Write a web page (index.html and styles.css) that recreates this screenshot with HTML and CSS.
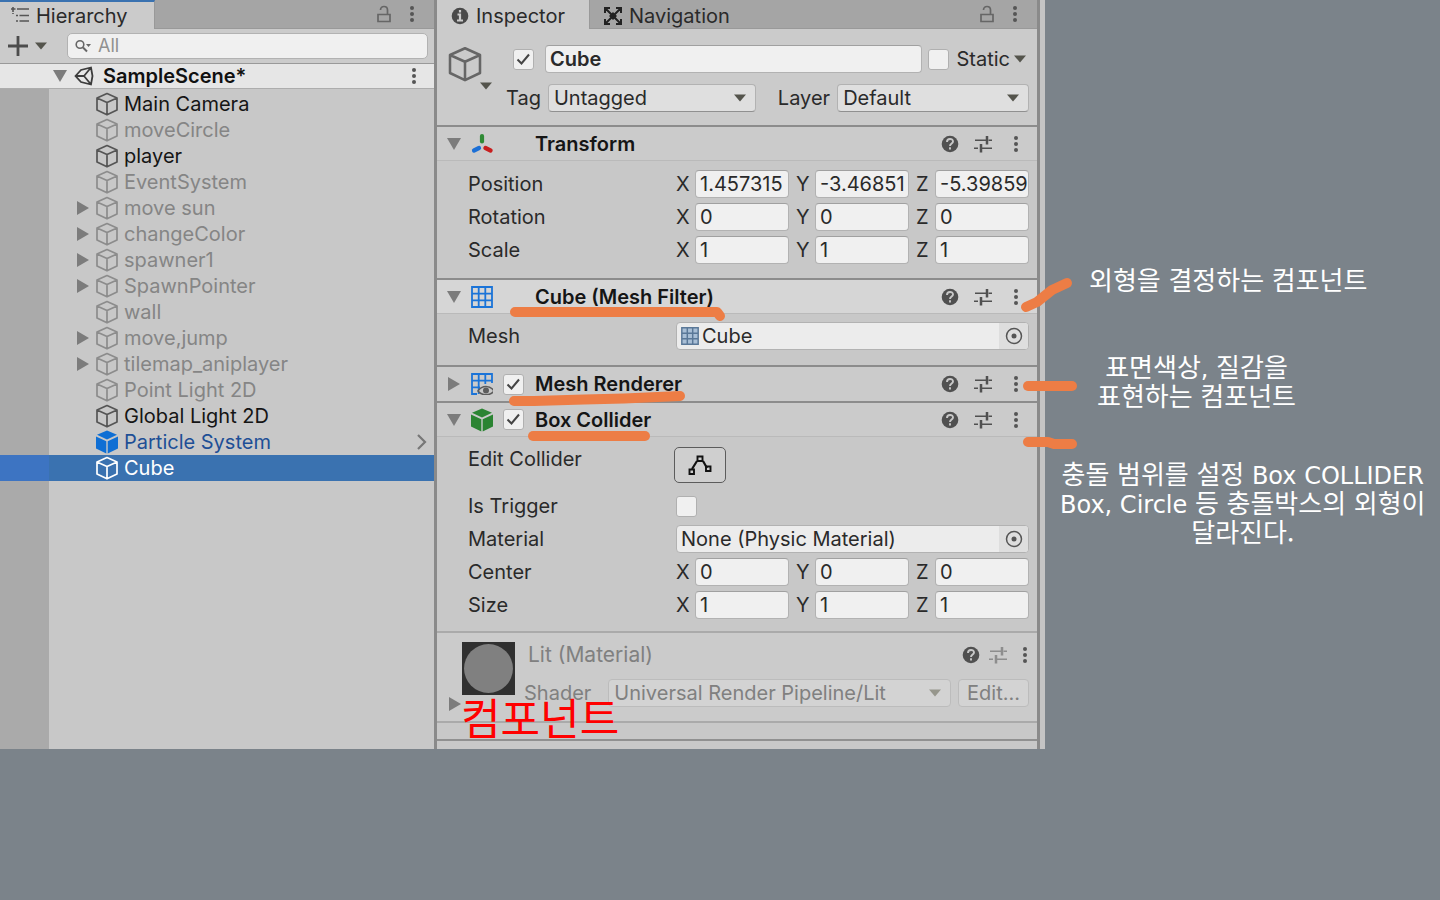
FILE: index.html
```html
<!DOCTYPE html>
<html lang="ko">
<head>
<meta charset="utf-8">
<title>Unity Inspector</title>
<link rel="stylesheet" href="styles.css">
</head>
<body>
<svg class="defs" aria-hidden="true">
  <symbol id="cube" viewBox="0 0 24 24"><path d="M12 1.500 22 6v12l-10 4.800L2 18V6zM2 6l10 4.500L22 6M12 10.500V22.500" fill="none" stroke="currentColor" stroke-width="1.700" stroke-linejoin="round"/></symbol>
  <symbol id="cube-solid" viewBox="0 0 24 24"><path d="M12 .5 22 4.800 12 9.400 2 4.800zM1 6.600l10.300 4.600v12.200L1 18.600zM23 6.600l-10.300 4.600v12.200L23 18.600z" fill="currentColor"/></symbol>
  <symbol id="down" viewBox="0 0 12 12"><path d="M0 2.500h12L6 9.500z" fill="currentColor"/></symbol>
  <symbol id="fold" viewBox="0 0 14 14"><path d="M0 1h14L7 13z" fill="currentColor"/></symbol>
  <symbol id="right" viewBox="0 0 14 14"><path d="M1 0v14l12-7z" fill="currentColor"/></symbol>
  <symbol id="dots" viewBox="0 0 6 18"><g fill="currentColor"><circle cx="3" cy="3" r="2"/><circle cx="3" cy="9" r="2"/><circle cx="3" cy="15" r="2"/></g></symbol>
  <symbol id="lock" viewBox="0 0 16 18"><path d="M2 9.500h12v7H2zM4.500 5C4.500 .3 11.500 .3 11.500 5v4.500" fill="none" stroke="currentColor" stroke-width="1.700"/></symbol>
  <symbol id="check" viewBox="0 0 20 20"><path d="M4.500 10.500l4 4L16 5.500" fill="none" stroke="currentColor" stroke-width="2"/></symbol>
  <symbol id="help" viewBox="0 0 18 18"><circle cx="9" cy="9" r="8.300" fill="currentColor"/><path d="M6 7c0-4 6-4 6-.5 0 2-3 2-3 4.500M9 12.300v2.200" fill="none" stroke="#c8c8c8" stroke-width="1.900"/></symbol>
  <symbol id="preset" viewBox="0 0 18 18"><path d="M1 5.200h11M14.500 5.200H18M0 13.300h4M8 13.300h10" fill="none" stroke="currentColor" stroke-width="1.600"/><path d="M13 1v8.500M7 9v8.500" stroke="currentColor" stroke-width="2.500"/></symbol>
  <symbol id="target" viewBox="0 0 18 18"><circle cx="9" cy="9" r="7.500" fill="none" stroke="currentColor" stroke-width="1.500"/><circle cx="9" cy="9" r="2.500" fill="currentColor"/></symbol>
  <symbol id="grid" viewBox="0 0 22 22"><path d="M1 1h20v20H1zM7.700 1v20M14.300 1v20M1 7.700h20M1 14.300h20" fill="none" stroke="currentColor" stroke-width="1.800"/></symbol>
</svg>

<div class="page">
  <section class="hierarchy" aria-label="Hierarchy">
    <header class="tabs">
      <button class="tab tab-active tab-focus"><svg class="i18" viewBox="0 0 18 18"><path d="M2 0v5M0 2h4.500M6 2h12M5 8.500h2M8.500 8.500H18M5 14h2M8.500 14H18M2 6v1" stroke="#555" stroke-width="1.600"/></svg>Hierarchy</button>
      <span class="tab-tools"><button aria-label="Lock"><svg class="lock"><use href="#lock"/></svg></button><button aria-label="Menu"><svg class="dots"><use href="#dots"/></svg></button></span>
    </header>
    <div class="toolbar">
      <button class="add" aria-label="Create"><svg class="plus" viewBox="0 0 20 20"><path d="M10 0v20M0 10h20" stroke="#4c4c4c" stroke-width="2.800"/></svg><svg class="i12"><use href="#down"/></svg></button>
      <label class="search"><svg viewBox="0 0 16 14"><circle cx="5" cy="5.500" r="3.800" fill="none" stroke="#666" stroke-width="1.600"/><path d="M8 8.500l4 4" stroke="#666" stroke-width="2"/><path d="M11 5h5l-2.500 3z" fill="#666"/></svg><input type="text" placeholder="All" aria-label="Search"></label>
    </div>
    <div class="scene"><button aria-label="Fold"><svg class="i14 fold"><use href="#fold"/></svg></button>
      <svg class="unity" viewBox="0 0 20 20"><path d="M1.500 10 7 4l10-2.500 1.500 8.500L17 18.500 7 16zM1.500 10H10M10 10 17 1.500M10 10l7 8.500" fill="none" stroke="#3c3c3c" stroke-width="1.800"/></svg>
      <b>SampleScene*</b><button class="scene-menu" aria-label="Scene menu"><svg class="dots"><use href="#dots"/></svg></button></div>
    <ul class="tree">
      <li><svg class="cube"><use href="#cube"/></svg>Main Camera</li>
      <li class="off"><svg class="cube"><use href="#cube"/></svg>moveCircle</li>
      <li><svg class="cube"><use href="#cube"/></svg>player</li>
      <li class="off"><svg class="cube"><use href="#cube"/></svg>EventSystem</li>
      <li class="off parent"><button aria-label="Expand"><svg class="i14"><use href="#right"/></svg></button><svg class="cube"><use href="#cube"/></svg>move sun</li>
      <li class="off parent"><button aria-label="Expand"><svg class="i14"><use href="#right"/></svg></button><svg class="cube"><use href="#cube"/></svg>changeColor</li>
      <li class="off parent"><button aria-label="Expand"><svg class="i14"><use href="#right"/></svg></button><svg class="cube"><use href="#cube"/></svg>spawner1</li>
      <li class="off parent"><button aria-label="Expand"><svg class="i14"><use href="#right"/></svg></button><svg class="cube"><use href="#cube"/></svg>SpawnPointer</li>
      <li class="off"><svg class="cube"><use href="#cube"/></svg>wall</li>
      <li class="off parent"><button aria-label="Expand"><svg class="i14"><use href="#right"/></svg></button><svg class="cube"><use href="#cube"/></svg>move,jump</li>
      <li class="off parent"><button aria-label="Expand"><svg class="i14"><use href="#right"/></svg></button><svg class="cube"><use href="#cube"/></svg>tilemap_aniplayer</li>
      <li class="off"><svg class="cube"><use href="#cube"/></svg>Point Light 2D</li>
      <li><svg class="cube"><use href="#cube"/></svg>Global Light 2D</li>
      <li class="prefab"><svg class="cube"><use href="#cube-solid"/></svg>Particle System<svg class="chevron" viewBox="0 0 10 16"><path d="M1 1l7 7-7 7" fill="none" stroke="#777" stroke-width="2.200"/></svg></li>
      <li class="selected"><svg class="cube"><use href="#cube"/></svg>Cube</li>
    </ul>
  </section>

  <section class="inspector" aria-label="Inspector">
    <header class="tabs">
      <button class="tab tab-active tab-inspector"><svg class="i18" viewBox="0 0 18 18"><circle cx="9" cy="9" r="8.300" fill="#4a4a4a"/><path d="M9 3v2.500M6.500 7.500H9V13M6 13.500h6" fill="none" stroke="#ccc" stroke-width="2.200"/></svg>Inspector</button>
      <button class="tab"><svg class="i18" viewBox="0 0 18 18"><path d="M2 2l14 14M16 2 2 16M1 6V1h5M12 1h5v5M17 12v5h-5M6 17H1v-5" fill="none" stroke="#222" stroke-width="2"/><path d="M9 5 13 9 9 13 5 9z" fill="#222"/></svg>Navigation</button>
      <span class="tab-tools"><button aria-label="Lock"><svg class="lock"><use href="#lock"/></svg></button><button aria-label="Menu"><svg class="dots"><use href="#dots"/></svg></button></span>
    </header>

    <div class="object">
      <button class="object-icon" aria-label="Icon"><svg class="big-cube"><use href="#cube"/></svg><svg class="i12"><use href="#down"/></svg></button>
      <div class="object-fields">
        <div class="object-row">
          <label class="check"><input type="checkbox" checked aria-label="Active"><svg><use href="#check"/></svg></label>
          <input class="field name" type="text" value="Cube" aria-label="Name">
          <label class="static"><span class="check"><input type="checkbox"><svg><use href="#check"/></svg></span>Static<svg class="i12"><use href="#down"/></svg></label>
        </div>
        <div class="object-row tag-row">
          <label for="tag">Tag</label><span class="select tag"><select id="tag"><option>Untagged</option></select><svg class="i12"><use href="#down"/></svg></span>
          <label class="layer-label" for="layer">Layer</label><span class="select layer"><select id="layer"><option>Default</option></select><svg class="i12"><use href="#down"/></svg></span>
        </div>
      </div>
    </div>

    <article class="component">
      <header><button class="folder" aria-label="Fold"><svg class="i14"><use href="#fold"/></svg></button>
        <svg class="kind" viewBox="0 0 22 22"><g stroke-width="4.200" stroke-linecap="round"><path d="M11 3v5.500" stroke="#2f8a35"/><path d="M8 15l-5 2.500" stroke="#1b6fd6"/><path d="M14.500 15l5 2.500" stroke="#c81e1e"/></g></svg>
        <span class="slot"></span><h2>Transform</h2>
        <span class="tools"><button aria-label="Help"><svg class="i18"><use href="#help"/></svg></button><button aria-label="Preset"><svg class="i18"><use href="#preset"/></svg></button><button aria-label="Menu"><svg class="dots"><use href="#dots"/></svg></button></span></header>
      <div class="props transform">
        <div class="prop"><span>Position</span><div class="xyz"><label>X<input class="field" value="1.457315"></label><label>Y<input class="field" value="-3.46851"></label><label>Z<input class="field" value="-5.39859"></label></div></div>
        <div class="prop"><span>Rotation</span><div class="xyz"><label>X<input class="field" value="0"></label><label>Y<input class="field" value="0"></label><label>Z<input class="field" value="0"></label></div></div>
        <div class="prop"><span>Scale</span><div class="xyz"><label>X<input class="field" value="1"></label><label>Y<input class="field" value="1"></label><label>Z<input class="field" value="1"></label></div></div>
      </div>
    </article>

    <article class="component">
      <header class="hover"><button class="folder" aria-label="Fold"><svg class="i14"><use href="#fold"/></svg></button>
        <svg class="kind blue"><use href="#grid"/></svg>
        <span class="slot"></span><h2>Cube (Mesh Filter)</h2>
        <span class="tools"><button aria-label="Help"><svg class="i18"><use href="#help"/></svg></button><button aria-label="Preset"><svg class="i18"><use href="#preset"/></svg></button><button aria-label="Menu"><svg class="dots"><use href="#dots"/></svg></button></span>
        <svg class="stroke under-filter" viewBox="0 0 216 18"><path d="M6 6h202l3 4"/></svg>
        <svg class="stroke out-filter" viewBox="0 0 54 36"><path d="M7 30l11-5L33 13l15-7"/></svg></header>
      <div class="props mesh">
        <div class="prop"><label for="mesh">Mesh</label><div class="object-field"><svg class="mesh-icon" viewBox="0 0 22 22"><path d="M1 1h20v20H1z" fill="#a9bfd6"/><use href="#grid"/></svg><input id="mesh" value="Cube"><button aria-label="Select"><svg class="i18"><use href="#target"/></svg></button></div></div>
      </div>
    </article>

    <article class="component">
      <header class="closed"><button class="folder" aria-label="Unfold"><svg class="i14"><use href="#right"/></svg></button>
        <svg class="kind" viewBox="0 0 22 22"><path d="M6 21H1V1h20v9M7.700 1v20M14.300 1v10M1 7.700h20M1 14.300h8" fill="none" stroke="#1b74d8" stroke-width="1.800"/><path d="M7 18c4-6 12-6 16 0-4 5-12 5-16 0z" fill="#c8c8c8" stroke="#5c5c5c" stroke-width="1.600"/><circle cx="15" cy="17.500" r="3" fill="#5c5c5c"/></svg>
        <label class="check slot"><input type="checkbox" checked aria-label="Mesh Renderer enabled"><svg><use href="#check"/></svg></label><h2>Mesh Renderer</h2>
        <span class="tools"><button aria-label="Help"><svg class="i18"><use href="#help"/></svg></button><button aria-label="Preset"><svg class="i18"><use href="#preset"/></svg></button><button aria-label="Menu"><svg class="dots"><use href="#dots"/></svg></button></span>
        <svg class="stroke under-renderer" viewBox="0 0 180 16"><path d="M7 10l20 0 50-1.500 40-1 56-2.500"/></svg>
        <svg class="stroke out-renderer" viewBox="0 0 56 12"><path d="M6 6h44"/></svg></header>
    </article>

    <article class="component last">
      <header><button class="folder" aria-label="Fold"><svg class="i14"><use href="#fold"/></svg></button>
        <svg class="kind green"><use href="#cube-solid"/></svg>
        <label class="check slot"><input type="checkbox" checked aria-label="Box Collider enabled"><svg><use href="#check"/></svg></label><h2>Box Collider</h2>
        <span class="tools"><button aria-label="Help"><svg class="i18"><use href="#help"/></svg></button><button aria-label="Preset"><svg class="i18"><use href="#preset"/></svg></button><button aria-label="Menu"><svg class="dots"><use href="#dots"/></svg></button></span>
        <svg class="stroke under-collider" viewBox="0 0 124 12"><path d="M6 6h112"/></svg>
        <svg class="stroke out-collider" viewBox="0 0 56 14"><path d="M6 6h20l6 2h18"/></svg></header>
      <div class="props collider">
        <div class="prop edit"><span>Edit Collider</span><button class="edit-button" aria-label="Edit Collider"><svg viewBox="0 0 24 20"><path d="M4 14l5-8M15 6l4 7" stroke="#111" stroke-width="2.200"/><path d="M1.500 14.500h4.500v4.500H1.500zM9.500 1.500h5V6h-5zM18 11.500h4.500V16H18z" fill="none" stroke="#111" stroke-width="1.900"/></svg></button></div>
        <div class="prop"><label for="trigger">Is Trigger</label><span class="check"><input id="trigger" type="checkbox"><svg><use href="#check"/></svg></span></div>
        <div class="prop"><label for="material">Material</label><div class="object-field"><input id="material" value="None (Physic Material)"><button aria-label="Select"><svg class="i18"><use href="#target"/></svg></button></div></div>
        <div class="prop"><span>Center</span><div class="xyz"><label>X<input class="field" value="0"></label><label>Y<input class="field" value="0"></label><label>Z<input class="field" value="0"></label></div></div>
        <div class="prop"><span>Size</span><div class="xyz"><label>X<input class="field" value="1"></label><label>Y<input class="field" value="1"></label><label>Z<input class="field" value="1"></label></div></div>
      </div>
    </article>

    <article class="material">
      <button class="material-fold" aria-label="Unfold"><svg class="i14"><use href="#right"/></svg></button>
      <svg class="preview" viewBox="0 0 52 52"><path d="M0 0h52v52H0z" fill="#303030"/><circle cx="26" cy="26" r="24" fill="#808080"/></svg>
      <div class="material-main">
        <div class="material-title"><span>Lit (Material)</span><span class="tools"><button aria-label="Help"><svg class="i18"><use href="#help"/></svg></button><button class="faded" aria-label="Preset"><svg class="i18"><use href="#preset"/></svg></button><button aria-label="Menu"><svg class="dots"><use href="#dots"/></svg></button></span></div>
        <div class="shader"><label for="shader">Shader</label><span class="select"><select id="shader" disabled><option>Universal Render Pipeline/Lit</option></select><svg class="i12"><use href="#down"/></svg></span><button class="edit-shader" disabled>Edit...</button></div>
      </div>
      <strong class="caption">컴포넌트</strong>
    </article>
    <div class="footer"></div>
  </section>

  <aside class="notes">
    <p class="note-filter">외형을<span> </span>결정하는<span> </span>컴포넌트</p>
    <p class="note-renderer">표면색상<span>, </span>질감을<br>표현하는<span> </span>컴포넌트</p>
    <p class="note-collider">충돌<span> </span>범위를<span> </span>설정<span> Box COLLIDER</span><br><span>Box, Circle </span>등<span> </span>충돌박스의<span> </span>외형이<br>달라진다.</p>
  </aside>
</div>
</body>
</html>
```

FILE: styles.css
```css
* { box-sizing: border-box; }

body {
  margin: 0;
  background: #7b838a;
  color: #2a2a2a;
  font: 20px/26px Inter, "Noto Sans CJK KR", sans-serif;
}

button, input, select { font: inherit; color: inherit; }
button { padding: 0; border: 0; background: none; display: flex; align-items: center; }
svg { display: block; flex: none; }
.defs { position: absolute; width: 0; height: 0; }

.page { display: grid; grid-template-columns: 434fr 611fr 395fr; align-items: stretch; }

.i12 { width: 12px; height: 12px; color: #54544c; }
.i14 { width: 14px; height: 14px; color: #7c7c7c; }
.i18 { width: 18px; height: 18px; }
.dots { width: 6px; height: 18px; color: #555; }
.lock { width: 16px; height: 18px; color: #666; }

/* Tabs */
.tabs { display: flex; height: 29px; background: #a5a5a5; border-bottom: 1px solid #999; }
.tab { gap: 7px; height: 29px; padding: 2px 12px 0 14px; white-space: nowrap; }
.tab-active { background: #cbcbcb; border-right: 1px solid #999; }
.tab-focus { width: 155px; padding: 0 0 0 11px; border-top: 2px solid #3a72b0; }
.tab-inspector { width: 153px; padding-left: 14px; }
.tab-tools { display: flex; align-items: center; gap: 17px; margin-left: auto; padding-right: 19px; }

/* Hierarchy */
.hierarchy { background: #c8c8c8; display: flex; flex-direction: column; min-width: 0; }
.toolbar { display: flex; align-items: center; gap: 20px; height: 35px; padding: 0 6px 0 8px; background: #cbcbcb; border-bottom: 1px solid #999; }
.add { gap: 7px; }
.plus { width: 20px; height: 20px; }
.search { display: flex; flex: 1; align-items: center; gap: 7px; height: 26px; padding: 0 7px; background: #f0f0f0; border: 1px solid #b2b2b2; border-radius: 5px; min-width: 0; }
.search svg { width: 16px; height: 14px; }
.search input { flex: 1; min-width: 0; border: 0; padding: 0; background: none; font-size: 18px; }
.search input::placeholder { color: #909090; }
.scene { display: flex; align-items: center; height: 25px; padding: 0 17px 0 53px; background: #e6e6e6; border-bottom: 1px solid #adadad; color: #111; }
.scene b { margin-left: 9px; font-weight: 600; }
.scene-menu { margin-left: auto; }
.unity { width: 20px; height: 20px; margin-left: 7px; }
.tree { flex: 1; margin: 0; padding: 2px 0 0; list-style: none; background: linear-gradient(to right, #aaa 49px, #c8c8c8 49px); }
.tree li { display: flex; align-items: center; gap: 5px; height: 26px; padding: 0 7px 0 95px; color: #151515; }
.tree .parent { padding-left: 76px; }
.tree .off { color: #858585; }
.cube { width: 24px; height: 24px; color: #555; }
.off .cube { color: #8c8c8c; }
.tree .prefab { color: #1e4f96; }
.prefab .cube { color: #0f6fd4; }
.chevron { width: 10px; height: 16px; margin-left: auto; }
.tree .selected { color: #fff; background: linear-gradient(to right, #3d74c2 49px, #3a72b0 49px); }
.selected .cube { color: #fff; }

/* Inspector */
.inspector { position: relative; min-width: 0; background: #c8c8c8; border: solid #8a8a8a; border-width: 0 3px; margin-right: 5px; box-shadow: 5px 0 0 #c4c4c4; }
.object { display: flex; gap: 15px; height: 98px; padding: 16px 8px 0 10px; background: #cbcbcb; border-bottom: 2px solid #8c8c8c; }
.object-icon { display: block; width: 44px; height: 44px; }
.object-icon .i12 { margin: -3px 0 0 33px; }
.big-cube { width: 36px; height: 38px; color: #666; }
.object-fields { flex: 1; min-width: 0; display: grid; gap: 11px; align-content: start; }
.object-row { display: flex; align-items: center; height: 28px; }
.object-row > .check { margin-left: 7px; }
.name { flex: 1; margin: 0 6px 0 11px; font-weight: 600; }
.static { display: flex; align-items: center; gap: 7px; padding-right: 3px; }
.static .i12 { margin-left: -3px; }
.select { position: relative; display: flex; min-width: 0; }
.select select { width: 100%; height: 28px; padding: 0 30px 0 5px; appearance: none; background: #dfdfdf; border: 1px solid #b2b2b2; border-bottom-color: #909090; border-radius: 4px; }
.select .i12 { position: absolute; right: 10px; top: 8px; pointer-events: none; }
.tag { flex: 208; margin-left: 7px; }
.layer-label { margin-left: 22px; }
.layer { flex: 192; margin-left: 7px; }

.check { position: relative; display: block; width: 21px; height: 21px; }
.check input { display: block; width: 21px; height: 21px; margin: 0; appearance: none; background: #f0f0f0; border: 1px solid #b0b0b0; border-radius: 3px; }
.check svg { position: absolute; inset: 0; width: 20px; height: 20px; color: #444; visibility: hidden; pointer-events: none; }
.check input:checked + svg { visibility: visible; }

.field { min-width: 0; width: 100%; height: 28px; padding: 0 0 0 4px; background: #f0f0f0; border: 1px solid #b2b2b2; border-top-color: #a0a0a0; border-radius: 4px; }

.component { border-bottom: 2px solid #8c8c8c; }
.last { border-bottom-color: #aaa; }
.component header { position: relative; display: flex; align-items: center; height: 34px; padding: 0 18px 0 10px; background: #cbcbcb; border-bottom: 1px solid #bababa; }
.component header.hover { background: #d6d6d6; }
.component header.closed { border-bottom: 0; }
.kind { width: 22px; height: 22px; margin: 0 10px; }
.blue { color: #1b74d8; }
.green { width: 24px; height: 24px; margin: 0 9px 0 9px; color: #2b8432; }
.slot { width: 21px; }
.component h2 { margin: 0 0 0 11px; font-size: 20px; font-weight: 600; white-space: nowrap; color: #151515; }
.tools { display: flex; align-items: center; gap: 15px; margin-left: auto; color: #505050; }
.tools .dots { margin-left: 6px; }

.props { display: grid; gap: 5px; align-content: start; padding: 9px 8px 0 31px; }
.transform { padding-bottom: 14px; }
.mesh { padding: 8px 8px 15px 31px; }
.collider { padding-bottom: 12px; }
.prop { display: grid; grid-template-columns: 208fr 353fr; align-items: center; height: 28px; }
.xyz { display: grid; grid-template-columns: repeat(3, 1fr); gap: 7px; min-width: 0; }
.xyz label { display: grid; grid-template-columns: 19px 1fr; align-items: center; }
.object-field { display: flex; align-items: center; height: 28px; background: #ececec; border: 1px solid #b2b2b2; border-radius: 4px; overflow: hidden; min-width: 0; }
.object-field input { flex: 1; min-width: 0; border: 0; padding: 0 4px; background: none; }
.object-field button { justify-content: center; width: 29px; height: 28px; background: #dedede; color: #555; }
.mesh-icon { width: 18px; height: 18px; margin: 0 -1px 0 4px; color: #5a7898; }
.prop.edit { height: 41px; align-items: start; }
.edit-button { justify-content: center; width: 52px; height: 36px; margin-left: -2px; margin-top: 1px; border: 1px solid #5c5c5c; border-radius: 5px; background: #cfcfcf; }
.edit-button svg { width: 24px; height: 20px; }

.material { position: relative; display: flex; height: 90px; padding: 7px 8px 0 11px; border-bottom: 2px solid #aaa; background: #cbcbcb; color: #808080; }
.material-fold { align-self: flex-end; padding-bottom: 10px; }
.preview { width: 53px; height: 53px; margin-top: 2px; }
.material-main { flex: 1; min-width: 0; }
.material-title { display: flex; align-items: center; height: 30px; padding: 0 1px 0 13px; font-size: 21px; }
.material-title .tools { gap: 9px; }
.faded { opacity: .5; }
.shader { display: flex; align-items: center; margin-top: 9px; padding-left: 9px; }
.shader .select { flex: 1; margin: 0 7px 0 17px; }
.shader select, .edit-shader { opacity: 1; color: #808080; background: #d3d3d3; border-color: #bcbcbc; }
.shader .i12 { color: #96968c; }
.edit-shader { justify-content: center; width: 71px; height: 28px; border: 1px solid #bcbcbc; border-radius: 4px; }
.footer { height: 18px; border-bottom: 2px solid #909090; margin-bottom: 8px; }

/* Hand-drawn marks */
.stroke { position: absolute; z-index: 1; overflow: visible; fill: none; stroke: #ed7d45; stroke-width: 10px; stroke-linecap: round; stroke-linejoin: round; pointer-events: none; }
.under-filter { left: 72px; top: 26px; width: 216px; height: 18px; }
.out-filter { right: -36px; top: -3px; width: 54px; height: 36px; }
.under-renderer { left: 70px; top: 24px; width: 180px; height: 16px; }
.out-renderer { right: -41px; top: 13px; width: 56px; height: 12px; }
.under-collider { left: 90px; top: 27px; width: 124px; height: 12px; }
.out-collider { right: -41px; top: 33px; width: 56px; height: 14px; }
.caption { position: absolute; left: 24px; top: 58px; font: 400 43px/50px "Noto Sans CJK KR", sans-serif; color: #f00; white-space: nowrap; }

.notes { min-width: 0; padding-top: 264px; color: #fff; font: 26px/29px "Noto Sans CJK KR", sans-serif; white-space: nowrap; }
.notes p { width: max-content; margin: 0; text-align: center; }
.notes span { font: 24px/20px "DejaVu Sans", sans-serif; }
.notes .note-filter { margin-left: 44px; }
.notes .note-renderer { margin: 58px 0 0 52px; }
.notes .note-collider { margin: 49px 0 0 15px; }
```
